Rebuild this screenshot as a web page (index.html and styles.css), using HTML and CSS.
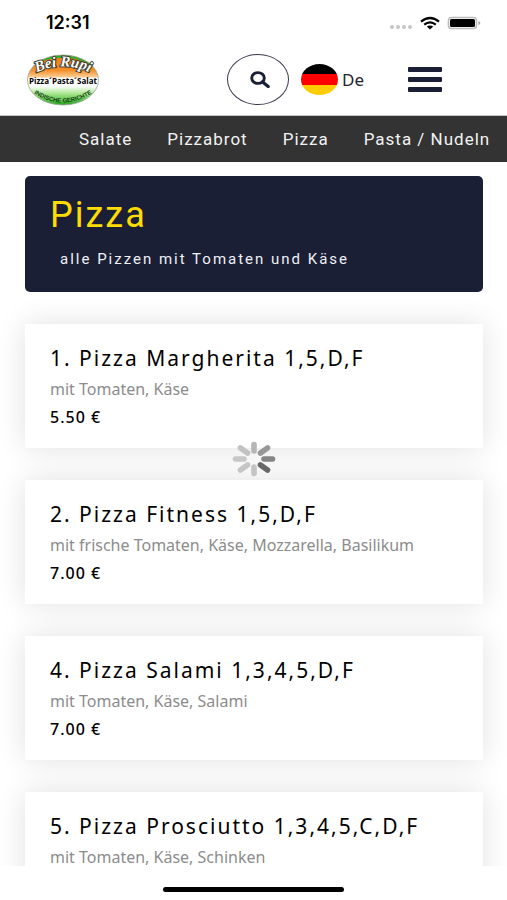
FILE: index.html
```html
<!DOCTYPE html>
<html lang="de">
<head>
<meta charset="utf-8">
<meta name="viewport" content="width=device-width, initial-scale=1">
<title>Bei Rupi</title>
<link rel="stylesheet" href="styles.css">
</head>
<body>
<div class="app">
  <div class="status">
    <span class="status-time">12:31</span>
    <svg class="status-icons" viewBox="0 0 92 16" aria-hidden="true">
      <g fill="#c6c6c6"><circle cx="3" cy="12" r="2"/><circle cx="9" cy="12" r="2"/><circle cx="15" cy="12" r="2"/><circle cx="21" cy="12" r="2"/></g>
      <g fill="none" stroke="#000" stroke-width="2.2"><path d="M32 6.600Q41 -0.6 50 6.600"/><path d="M35.200 9.700Q41 5.200 46.800 9.700"/></g>
      <path d="M37.800 11.600Q41 9.400 44.200 11.600L41 14.400Z"/>
      <rect x="59.500" y="2.500" width="28" height="11" rx="3" fill="#fff" stroke="#bbb" stroke-width="1.600"/>
      <rect x="61" y="4" width="25" height="8" rx="1.500"/>
      <path d="M89.400 6v4q2-.6 2-2t-2-2Z" fill="#aaa"/>
    </svg>
  </div>

  <header class="header">
    <a class="logo" href="#" aria-label="Bei Rupi">
      <svg viewBox="0 0 74 52">
        <defs>
          <linearGradient id="oval" x1="0" y1="0" x2="0" y2="1">
            <stop offset="0" stop-color="#ee7d18"/><stop offset=".3" stop-color="#f58d25"/><stop offset=".43" stop-color="#fbc98c"/>
            <stop offset=".47" stop-color="#fff"/><stop offset=".62" stop-color="#fff"/><stop offset=".78" stop-color="#a5e58a"/><stop offset="1" stop-color="#23a51d"/>
          </linearGradient>
          <clipPath id="edge"><ellipse cx="37" cy="26" rx="35.500" ry="25"/></clipPath>
          <path id="top" d="M7 20Q37 5 67 20"/>
          <path id="bottom" d="M3 36Q37 61 71 36"/>
        </defs>
        <ellipse cx="37" cy="26" rx="35.500" ry="25" fill="url(#oval)"/>
        <g clip-path="url(#edge)"><path d="M0 0H74V20Q60 3 37 4Q14 3 0 20Z" fill="#34a92b"/></g>
        <ellipse cx="37" cy="26" rx="35.500" ry="25" fill="none" stroke="#9aa596" stroke-width=".8"/>
        <text class="logo-name"><textPath href="#top" startOffset="50%">Bei Rupi</textPath></text>
        <text class="logo-mid" x="37" y="30">Pizza´Pasta´Salat</text>
        <text class="logo-sub"><textPath href="#bottom" startOffset="50%">INDISCHE GERICHTE</textPath></text>
      </svg>
    </a>
    <div class="tools">
      <button class="search" type="button" aria-label="Suche">
        <svg viewBox="0 0 20 17" fill="none" stroke="#1a1f35"><ellipse cx="8" cy="7" rx="6.300" ry="5.400" stroke-width="2.900"/><path d="M12.600 11L18.200 15.400" stroke-width="3.200" stroke-linecap="round"/></svg>
      </button>
      <button class="language" type="button">
        <span class="flag"></span>De
      </button>
      <button class="menu" type="button" aria-label="Menü">
        <span></span><span></span><span></span>
      </button>
    </div>
  </header>

  <nav class="categories">
    <a href="#">Salate</a>
    <a href="#">Pizzabrot</a>
    <a href="#">Pizza</a>
    <a href="#">Pasta / Nudeln</a>
  </nav>

  <main class="content">
    <section class="hero">
      <h1>Pizza</h1>
      <p>alle Pizzen mit Tomaten und Käse</p>
    </section>
    <article class="card">
      <h2>1. Pizza Margherita 1,5,D,F</h2>
      <p class="desc">mit Tomaten, Käse</p>
      <p class="price">5.50 €</p>
    </article>
    <article class="card">
      <h2>2. Pizza Fitness 1,5,D,F</h2>
      <p class="desc">mit frische Tomaten, Käse, Mozzarella, Basilikum</p>
      <p class="price">7.00 €</p>
    </article>
    <article class="card">
      <h2>4. Pizza Salami 1,3,4,5,D,F</h2>
      <p class="desc">mit Tomaten, Käse, Salami</p>
      <p class="price">7.00 €</p>
    </article>
    <article class="card">
      <h2>5. Pizza Prosciutto 1,3,4,5,C,D,F</h2>
      <p class="desc">mit Tomaten, Käse, Schinken</p>
    </article>
  </main>

  <div class="home"><span></span></div>

  <svg class="spinner" viewBox="-22 -18 44 36" aria-hidden="true">
    <g stroke-width="5.600" stroke-linecap="round">
      <path d="M0-8V-14.500" stroke="#b6b6b6"/>
      <path d="M6.500-6L13.500-11" stroke="#979797"/>
      <path d="M10 0H18.500" stroke="#858585"/>
      <path d="M6.500 6L13.500 11" stroke="#686868"/>
      <path d="M0 8V14.500" stroke="#c4c4c4"/>
      <path d="M-6.500 6L-13.500 11" stroke="#c6c6c6"/>
      <path d="M-10 0H-18.500" stroke="#c8c8c8"/>
      <path d="M-6.500-6L-13.500-11" stroke="#c2c2c2"/>
    </g>
  </svg>
</div>
</body>
</html>
```

FILE: styles.css
```css
* { box-sizing: border-box; }

body, h1, h2, p { margin: 0; }

body {
  background: #fff;
  color: #000;
  font-family: "Noto Sans", "Open Sans", sans-serif;
}

button {
  padding: 0;
  border: 0;
  background: none;
  color: inherit;
  font: inherit;
}

.app {
  position: relative;
  display: flex;
  flex-direction: column;
  height: 100vh;
  overflow: hidden;
}

.status {
  display: flex;
  flex: none;
  align-items: center;
  justify-content: space-between;
  height: 46px;
  padding: 0 26px 0 46px;
}

.status-time {
  font: 600 18px/20px Inter, sans-serif;
}

.status-icons { width: 92px; height: 16px; }

/* Header */
.header {
  display: flex;
  flex: none;
  align-items: center;
  justify-content: space-between;
  height: 70px;
  padding: 0 65px 2px 26px;
  border-bottom: 1px solid #c4c4c4;
}

.logo, .logo svg {
  display: block;
  width: 74px;
  height: 52px;
}

.logo svg { overflow: visible; }

.logo text { text-anchor: middle; }

.logo-name {
  fill: #fff;
  stroke: #3a3a2c;
  stroke-width: 2px;
  paint-order: stroke;
  font: italic bold 15px "Liberation Serif", serif;
}

.logo-mid { font: bold 8px "Open Sans", sans-serif; }

.logo-sub {
  fill: #123f10;
  font: bold 6px "Liberation Sans", sans-serif;
}

.tools {
  display: flex;
  align-items: center;
}

.search {
  display: grid;
  place-items: center;
  width: 62px;
  height: 51px;
  margin-right: 12px;
  border: 1px solid #34384a;
  border-radius: 50%;
}

.search svg { width: 20px; height: 17px; margin-left: 4px; }

.language {
  display: flex;
  align-items: center;
  gap: 4px;
  margin-right: 44px;
  color: #1f2230;
  font-size: 17px;
}

.flag {
  width: 37px;
  height: 31px;
  border-radius: 50%;
  background: linear-gradient(#000 33%, #f00 33% 67%, #fc0 67%);
}

.menu {
  display: grid;
  gap: 5px;
  width: 34px;
}

.menu span {
  height: 5px;
  border-radius: 1px;
  background: #1a1f35;
}

/* Category bar */
.categories {
  display: flex;
  flex: none;
  align-items: center;
  gap: 35px;
  height: 46px;
  padding-left: 79px;
  overflow: hidden;
  background: #333;
}

.categories a {
  color: #f2f2f2;
  font: 17px/24px Roboto, sans-serif;
  letter-spacing: 1px;
  text-decoration: none;
  white-space: nowrap;
}

/* Menu list */
.content {
  display: flex;
  flex: 1;
  flex-direction: column;
  gap: 32px;
  min-height: 0;
  padding: 14px 24px 0 25px;
  overflow: hidden;
}

.hero {
  flex: none;
  padding: 18px 25px 21px;
  border-radius: 5px;
  background: #1a1f35;
  font-family: Roboto, sans-serif;
}

.hero h1 {
  color: #ffdc00;
  font-size: 36px;
  font-weight: 400;
  line-height: 42px;
  letter-spacing: 2px;
}

.hero p {
  padding: 11px 10px 0;
  color: #f0f0f5;
  font-size: 15px;
  line-height: 24px;
  letter-spacing: 2px;
}

.card {
  flex: none;
  height: 124px;
  padding: 20px 25px;
  background: #fff;
  box-shadow: 0 0 28px rgba(0, 0, 0, 0.12);
}

.card h2 {
  font-size: 21px;
  font-weight: 400;
  line-height: 28px;
  letter-spacing: 2px;
  white-space: nowrap;
}

.card p {
  font-size: 16px;
  line-height: 28px;
}

.card .desc {
  padding-top: 3px;
  color: #8c8c8c;
}

.card .price {
  font-weight: 500;
  letter-spacing: 1px;
}

/* Home indicator */
.home {
  display: flex;
  flex: none;
  justify-content: center;
  height: 34px;
  padding-top: 21px;
}

.home span {
  width: 181px;
  height: 5px;
  border-radius: 3px;
  background: #000;
}

.spinner {
  position: absolute;
  top: 51%;
  left: 50%;
  width: 44px;
  height: 36px;
  transform: translate(-50%, -50%);
}
```
